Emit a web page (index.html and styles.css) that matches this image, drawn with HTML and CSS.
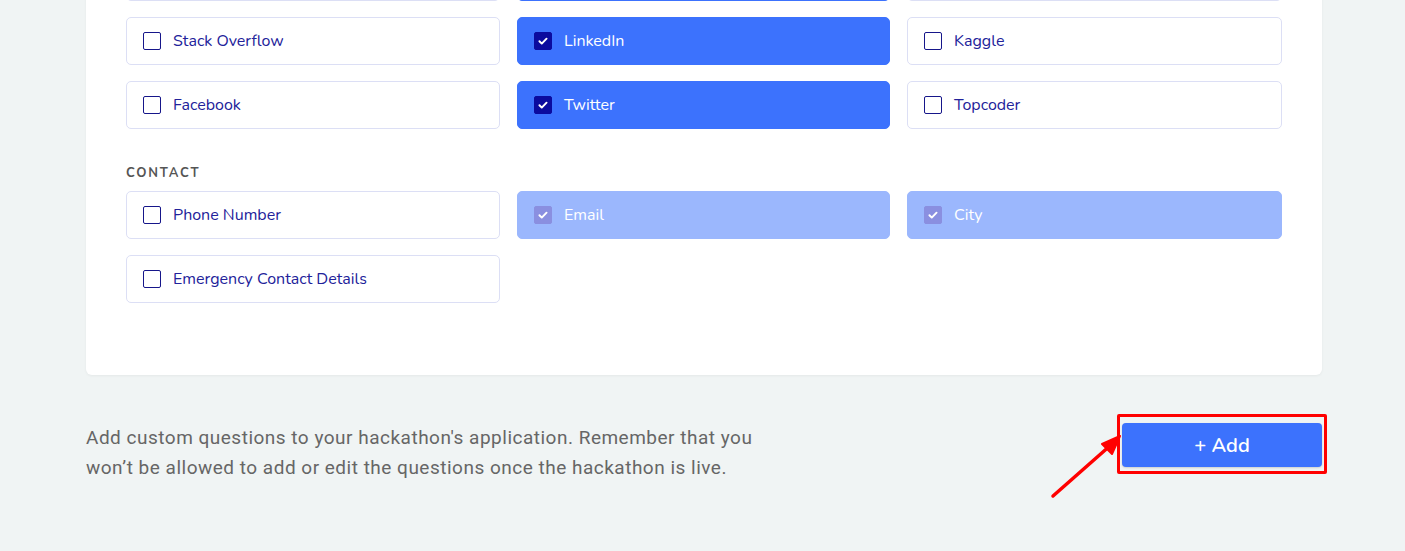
FILE: index.html
```html
<!DOCTYPE html>
<html>
<head>
<meta charset="utf-8">
<link rel="stylesheet" href="styles.css">
</head>
<body>
<div class="page">
  <div class="card">
    <div class="grid cut">
      <div class="opt"></div>
      <div class="opt checked"></div>
      <div class="opt"></div>
    </div>
    <div class="grid">
      <label class="opt"><span class="box"></span><span class="txt">Stack Overflow</span></label>
      <label class="opt checked"><span class="box"><svg viewBox="0 0 18 18"><path d="M5 9.3l2.6 2.6L13 6.4" /></svg></span><span class="txt">LinkedIn</span></label>
      <label class="opt"><span class="box"></span><span class="txt">Kaggle</span></label>
      <label class="opt"><span class="box"></span><span class="txt">Facebook</span></label>
      <label class="opt checked"><span class="box"><svg viewBox="0 0 18 18"><path d="M5 9.3l2.6 2.6L13 6.4" /></svg></span><span class="txt">Twitter</span></label>
      <label class="opt"><span class="box"></span><span class="txt">Topcoder</span></label>
    </div>
    <div class="section-title">CONTACT</div>
    <div class="grid">
      <label class="opt"><span class="box"></span><span class="txt">Phone Number</span></label>
      <label class="opt disabled"><span class="box"><svg viewBox="0 0 18 18"><path d="M5 9.3l2.6 2.6L13 6.4" /></svg></span><span class="txt">Email</span></label>
      <label class="opt disabled"><span class="box"><svg viewBox="0 0 18 18"><path d="M5 9.3l2.6 2.6L13 6.4" /></svg></span><span class="txt">City</span></label>
      <label class="opt"><span class="box"></span><span class="txt">Emergency Contact Details</span></label>
    </div>
  </div>
  <div class="footer">
    <p class="note">Add custom questions to your hackathon's application. Remember that you won’t be allowed to add or edit the questions once the hackathon is live.</p>
    <div class="add-wrap">
      <button class="add">+ Add</button>
      <svg class="arrow" viewBox="0 0 80 90" width="80" height="90"><path d="M3 84 L62 32" stroke="#f00" stroke-width="3.5" stroke-linecap="round" fill="none"/><path d="M70 24 L52 32 L62 42 Z" fill="#f00" stroke="#f00" stroke-width="2" stroke-linejoin="round"/></svg>
    </div>
  </div>
</div>
</body>
</html>
```
FILE: styles.css
```css
* { box-sizing: border-box; }
html, body { margin: 0; padding: 0; }
body {
  background: #f0f4f4;
  font-family: "Nunito", "Lato", "Noto Sans", sans-serif;
  height: 551px;
  overflow: hidden;
}
.page {
  padding: 0 83px 0 86px;
  margin-top: -47px;
}
.card {
  background: #fff;
  border-radius: 0 0 6px 6px;
  padding: 0 40px 72px;
  box-shadow: 0 1px 3px rgba(0,0,0,0.05);
}
.grid {
  display: grid;
  grid-template-columns: 374px 373px 375px;
  column-gap: 17px;
  row-gap: 16px;
  margin-bottom: 16px;
}
.card > .grid:last-child { margin-bottom: 0; }
.opt {
  height: 48px;
  border: 1px solid #dcdff5;
  border-radius: 5px;
  display: flex;
  align-items: center;
  padding-left: 16px;
  background: #fff;
}
.box {
  width: 18px;
  height: 18px;
  border: 1.5px solid #16168a;
  border-radius: 2px;
  margin-right: 12px;
  flex: none;
  display: flex;
}
.box svg { width: 100%; height: 100%; }
.box path { fill: none; stroke: #fff; stroke-width: 2.2; stroke-linecap: round; stroke-linejoin: round; }
.txt {
  font-size: 16px;
  color: #22229a;
}
.opt.checked {
  background: #3c72fd;
  border-color: #3c72fd;
}
.opt.checked .box { background: #0b0b9e; border-color: #0b0b9e; }
.opt.checked .txt { color: #fff; }
.opt.disabled {
  background: #9bb7fd;
  border-color: #9bb7fd;
}
.opt.disabled .box { background: #8a8fe0; border-color: #8a8fe0; }
.opt.disabled .txt { color: #fff; }
.section-title {
  font-size: 13px;
  font-weight: 700;
  letter-spacing: 1.8px;
  color: #555;
  margin: 36px 0 10px;
  line-height: 16px;
}
.footer {
  display: flex;
  justify-content: space-between;
  align-items: flex-start;
  padding-top: 48px;
}
.note {
  margin: 0;
  width: 700px;
  font-size: 19px;
  line-height: 30px;
  letter-spacing: 0.5px;
  color: #666;
  font-family: "Roboto", "Lato", sans-serif;
  font-weight: 400;
}
.add-wrap {
  position: relative;
  margin-top: -9px;
  margin-right: -5px;
  border: 3px solid #f00;
  padding: 6px 2px 4px 2px;
  border-radius: 2px;
}
.add {
  display: block;
  width: 200px;
  height: 44px;
  background: #3c72fd;
  border: none;
  border-radius: 4px;
  color: #fff;
  font-size: 20px;
  font-family: "Nunito", "Lato", "Noto Sans", sans-serif;
  font-weight: 600;
  box-shadow: 0 1px 2px rgba(0,0,0,0.15);
}
.arrow {
  position: absolute;
  left: -70px;
  top: -5px;
}
```
